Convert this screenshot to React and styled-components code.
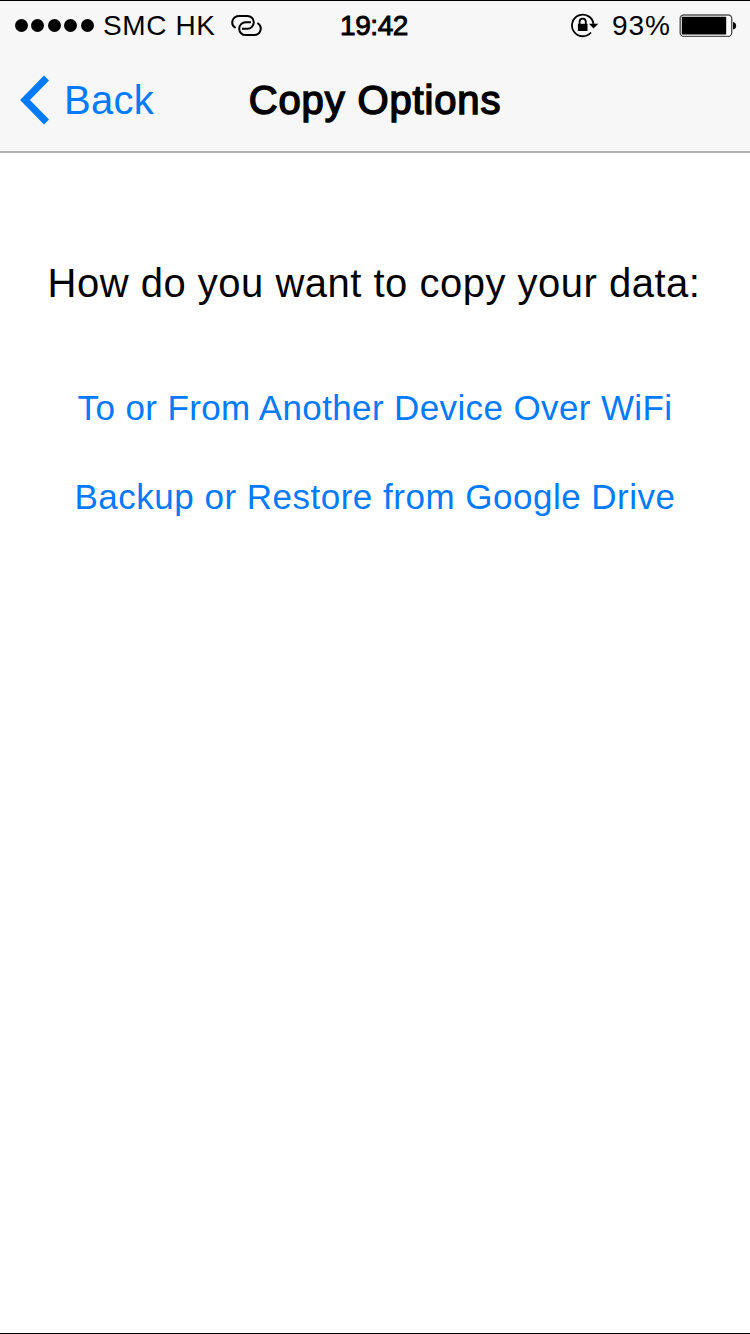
import styled, { createGlobalStyle } from "styled-components";

const GlobalStyle = createGlobalStyle`
  * {
    box-sizing: border-box;
  }

  body {
    margin: 0;
    background: #fff;
    font-family: "Liberation Sans", Arial, sans-serif;
    color: #000;
  }
`;

export const Screen = styled.div`
  width: 750px;
  height: 1334px;
  border-top: 1px solid #000;
  border-bottom: 1px solid #000;
  background: #fff;
  overflow: hidden;
`;

export const Header = styled.header`
  height: 152px;
  background: #f7f7f7;
  border-bottom: 2px solid #b2b2b2;
`;

export const StatusBar = styled.div`
  display: grid;
  grid-template-columns: 1fr auto 1fr;
  align-items: center;
  height: 49px;
  padding: 0 13px 0 15px;
  font-size: 28px;
  line-height: 32px;
`;

export const StatusGroup = styled.div`
  display: flex;
  align-items: center;
  justify-content: ${(props) => (props.$end ? "flex-end" : "flex-start")};

  svg {
    flex: none;
    display: block;
  }
`;

export const Signal = styled.div`
  display: flex;
  gap: 3.4px;
  margin-right: 9.5px;
`;

export const Dot = styled.span`
  width: 13px;
  height: 13px;
  border-radius: 50%;
  background: #000;
`;

export const Carrier = styled.span`
  letter-spacing: 0.6px;
  margin-right: 15.5px;
`;

export const Time = styled.span`
  padding-right: 4px;
  letter-spacing: -0.4px;
  -webkit-text-stroke: 0.9px #000;
`;

export const Percent = styled.span`
  letter-spacing: 1px;
  margin: 0 8px 0 12px;
`;

export const NavBar = styled.nav`
  display: grid;
  grid-template-columns: 1fr auto 1fr;
  align-items: center;
  height: 99px;
  padding: 0 20px;
  font-size: 40px;
  line-height: 46px;
`;

export const BackButton = styled.button`
  display: flex;
  align-items: center;
  gap: 14px;
  padding: 0;
  border: none;
  background: none;
  color: #007aff;
  font: inherit;
  letter-spacing: 0.3px;
  cursor: pointer;
`;

export const Title = styled.h1`
  margin: 0;
  font-size: 40px;
  font-weight: 400;
  letter-spacing: 0.85px;
  -webkit-text-stroke: 1.5px #000;
`;

export const Content = styled.main`
  display: flex;
  flex-direction: column;
  align-items: center;
  padding-top: 107px;
  white-space: nowrap;
`;

export const Question = styled.p`
  margin: 0 2px 82px 0;
  font-size: 40px;
  line-height: 46px;
  letter-spacing: 0.5px;
`;

export const OptionList = styled.div`
  display: flex;
  flex-direction: column;
  align-items: center;
  gap: 49px;
`;

export const Option = styled.button`
  padding: 0;
  border: none;
  background: none;
  color: #007aff;
  font-family: inherit;
  font-size: 35px;
  line-height: 40px;
  letter-spacing: ${(props) => props.$spacing};
  cursor: pointer;
`;

const HotspotIcon = () => (
  <svg width="32" height="24" viewBox="0 0.5 32 24" fill="none" stroke="#000" strokeWidth="2">
    <path d="M4.6 14.5C-1 11.2 0.6 2.4 8.5 2.4H16.4A6.4 6.45 0 0 1 16.4 15.3H11" />
    <path d="M26.4 9.5C32 12.8 30.4 21.6 22.5 21.6H14.6A6.4 6.45 0 0 1 14.6 8.7H20" />
  </svg>
);

const RotationLockIcon = () => (
  <svg width="30" height="26" viewBox="0 0 30 26" fill="none" stroke="#000">
    <path d="M21 19.5A10.8 10.8 0 1 1 23.5 11" strokeWidth="1.8" />
    <path d="M18.9 10.8H28.3L23.6 15.6Z" fill="#000" stroke="none" />
    <path d="M9.6 12V8.8a3.1 3.1 0 0 1 6.2 0V12" strokeWidth="1.8" />
    <rect x="7.9" y="10.8" width="9.6" height="7.2" fill="#000" stroke="none" />
  </svg>
);

const BatteryIcon = () => (
  <svg width="58" height="24" viewBox="0 0 58 24">
    <rect x="1.2" y="1" width="51.5" height="21.4" rx="3.5" fill="#fff" stroke="#555" strokeWidth="1.4" />
    <rect x="2.8" y="2.8" width="44.4" height="17.8" rx="0.6" fill="#000" />
    <path d="M54 8C58.2 8.6 58.2 15 54 15.6Z" fill="#000" />
  </svg>
);

const BackIcon = () => (
  <svg width="30" height="50" viewBox="0 0 30 50" fill="none">
    <path d="M26.5 3L5 25L26.5 47" stroke="#007aff" strokeWidth="7" />
  </svg>
);

const options = [
  { label: "To or From Another Device Over WiFi", spacing: "0.38px" },
  { label: "Backup or Restore from Google Drive", spacing: "0.5px" },
];

export default function App() {
  return (
    <>
      <GlobalStyle />
      <Screen>
        <Header>
          <StatusBar>
            <StatusGroup>
              <Signal>
                {[1, 2, 3, 4, 5].map((n) => (
                  <Dot key={n} />
                ))}
              </Signal>
              <Carrier>SMC HK</Carrier>
              <HotspotIcon />
            </StatusGroup>
            <Time>19:42</Time>
            <StatusGroup $end>
              <RotationLockIcon />
              <Percent>93%</Percent>
              <BatteryIcon />
            </StatusGroup>
          </StatusBar>
          <NavBar>
            <BackButton>
              <BackIcon />
              Back
            </BackButton>
            <Title>Copy Options</Title>
          </NavBar>
        </Header>
        <Content>
          <Question>How do you want to copy your data:</Question>
          <OptionList>
            {options.map((option) => (
              <Option key={option.label} $spacing={option.spacing}>
                {option.label}
              </Option>
            ))}
          </OptionList>
        </Content>
      </Screen>
    </>
  );
}
